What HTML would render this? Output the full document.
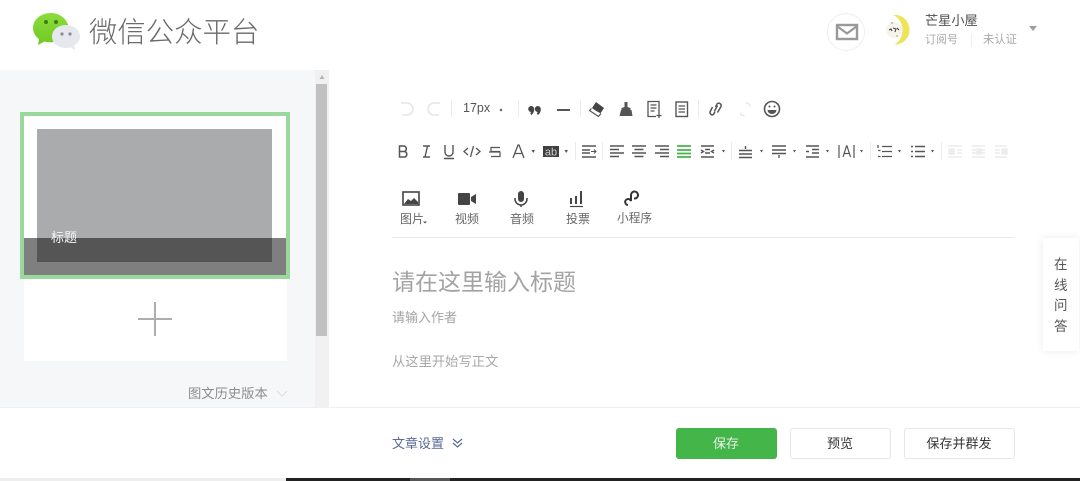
<!DOCTYPE html>
<html lang="zh"><head><meta charset="utf-8"><title>微信公众平台</title>
<style>
html,body{margin:0;padding:0;background:#fff}
#p{position:relative;width:1080px;height:481px;overflow:hidden;background:#fff;font-family:"Liberation Sans","Noto Sans CJK SC",sans-serif;filter:blur(.35px)}
#p div{position:absolute;white-space:nowrap}
svg{position:absolute;left:0;top:0}
.t{line-height:16px;font-size:12px;color:#555}
</style></head><body><div id="p">
<div style="left:0;top:70px;width:329px;height:338px;background:#f6f7f9"></div>
<div style="left:315px;top:70px;width:14px;height:338px;background:#f1f1f1"></div>
<div style="left:316px;top:84px;width:11px;height:252px;background:#c1c1c1"></div>
<div style="left:0;top:407px;width:1080px;height:1px;background:#eef0f2"></div>

<div style="left:20px;top:112px;width:270px;height:167px;box-sizing:border-box;border:4px solid #9bd89b;background:#fff"></div>
<div style="left:37px;top:129px;width:235px;height:133px;background:#aaabac"></div>
<div style="left:24px;top:238px;width:262px;height:37px;background:rgba(0,0,0,.5)"></div>
<div style="left:51px;top:230px;font-size:13px;line-height:16px;color:#f4f4f4">标题</div>
<div style="left:24px;top:279px;width:263px;height:82px;background:#fff"></div>
<div style="left:138px;top:318px;width:34px;height:2px;background:#aeaeae"></div>
<div style="left:154px;top:302px;width:2px;height:34px;background:#aeaeae"></div>
<div style="left:188px;top:385px;font-size:13.3px;line-height:17px;color:#8d8d8d">图文历史版本</div>

<div style="left:89px;top:14px;font-size:28.4px;line-height:38px;color:#6a6a6a;font-weight:300">微信公众平台</div>
<div style="left:925px;top:13px;font-size:13.2px;line-height:16px;color:#4f4f4f">芒星小屋</div>
<div style="left:925px;top:33px;font-size:11px;line-height:15px;color:#a9a9a9">订阅号</div>
<div style="left:983px;top:33px;font-size:11.3px;line-height:15px;color:#a9a9a9">未认证</div>
<div style="left:971px;top:34px;width:1px;height:13px;background:#eee"></div>

<div style="left:463px;top:100px;font-size:12.5px;line-height:16px;color:#555">17px</div>
<div class="t" style="left:400px;top:211px;color:#666">图片</div>
<div class="t" style="left:455px;top:211px;color:#666">视频</div>
<div class="t" style="left:510px;top:211px;color:#666">音频</div>
<div class="t" style="left:566px;top:211px;color:#666">投票</div>
<div class="t" style="left:617px;top:211px;font-size:11.7px;color:#666">小程序</div>
<div style="left:392px;top:237px;width:622px;height:1px;background:#e9e9e9"></div>

<div style="left:392px;top:267px;font-size:23px;line-height:30px;color:#a3a3a3">请在这里输入标题</div>
<div style="left:392px;top:309px;font-size:13px;line-height:17px;color:#a3a3a3">请输入作者</div>
<div style="left:392px;top:353px;font-size:13.3px;line-height:17px;color:#a8a8a8">从这里开始写正文</div>

<div style="left:1043px;top:238px;width:36px;height:113px;background:#fff;box-shadow:0 0 8px rgba(0,0,0,.08)"></div>
<div style="left:1054px;top:255px;width:16px;font-size:13.5px;line-height:20.5px;color:#555;white-space:normal">在<br>线<br>问<br>答</div>

<div style="left:392px;top:435px;font-size:13px;line-height:17px;color:#5a6a92">文章设置</div>
<div style="left:676px;top:428px;width:100px;height:31px;padding-right:1px;background:#44b549;border-radius:3px;color:#e6f6e6;font-size:13px;line-height:31px;text-align:center">保存</div>
<div style="left:790px;top:428px;width:100px;height:31px;padding-right:1px;box-sizing:border-box;border:1px solid #e7e7eb;border-radius:3px;color:#353535;font-size:13px;line-height:29px;text-align:center;width:101px">预览</div>
<div style="left:904px;top:428px;width:111px;height:31px;padding-right:1px;box-sizing:border-box;border:1px solid #e7e7eb;border-radius:3px;color:#353535;font-size:13px;line-height:29px;text-align:center">保存并群发</div>

<div style="left:0;top:478px;width:286px;height:3px;background:#eee"></div>
<div style="left:286px;top:478px;width:794px;height:3px;background:#222"></div>
<div style="left:410px;top:478px;width:40px;height:3px;background:#555"></div>

<svg width="1080" height="481" viewBox="0 0 1080 481" fill="none">
<defs><linearGradient id="g" x1="0" y1="0" x2="0" y2="1"><stop offset="0" stop-color="#8cdc3c"/><stop offset="1" stop-color="#6fca22"/></linearGradient></defs>
<!-- logo -->
<path d="M51 13c-10 0-18 6.500-18 15 0 4.500 2.500 8.500 6 11l-1 6 6.500-3.500c2 .5 4 .8 6.500.8 1 0 2 0 3-.2-.5-1.500-.8-3-.8-4.500 0-7 6.500-12.500 14-12.500h1C66 18 59 13 51 13z" fill="url(#g)"/>
<path d="M66 25c-8 0-14 5-14 11.500S58 48 66 48c1.500 0 3-.2 4.500-.6L75 50l-1-4.500c3.500-2 6-5.300 6-9C80 30 74 25 66 25z" fill="#e6e8ee"/>
<circle cx="46" cy="22" r="2" fill="#3f7d12"/><circle cx="56" cy="22" r="2" fill="#3f7d12"/>
<circle cx="62" cy="34" r="1.600" fill="#8a8d96"/><circle cx="70" cy="34" r="1.600" fill="#8a8d96"/>
<!-- scroll arrow -->
<path d="M322 75l-2.500 4h5z" fill="#b5b5b5"/>
<path d="M277 391l5 5 5-5" stroke="#e0e0e0" stroke-width="1.200"/>
<!-- mail -->
<circle cx="846" cy="32" r="18.500" fill="#fff" stroke="#eee"/>
<rect x="837" y="25" width="20" height="14" stroke="#9a9a9a" stroke-width="2.400"/>
<path d="M837.500 26.500l9.500 7 9.500-7" stroke="#9a9a9a" stroke-width="2.200"/>
<!-- avatar -->
<path d="M893 15c9-1 16.500 5.500 16.500 15 0 9-7.500 15-15.500 14.500 5-2 8.500-8 8.500-14.500 0-6.500-4-13-9.500-15z" fill="#efe35a"/>
<circle cx="894" cy="30" r="8" fill="#f5f3ea"/>
<path d="M889 30l2-1 1 2M893 28l3 1-1 3M897 28l2 2" stroke="#444" stroke-width="1.100"/>
<circle cx="892" cy="23" r=".7" fill="#777"/><circle cx="897" cy="36" r=".8" fill="#999"/>
<path d="M1029 26h8l-4 5z" fill="#a0a0a0"/>
<!-- row 1 -->
<g stroke="#e6e6e6" stroke-width="1.600">
<path d="M401 103h6a6 6 0 0 1 0 12h-5"/>
<path d="M440 103h-6a6 6 0 0 0 0 12h5"/>
</g>
<g fill="#ececec">
<rect x="451" y="100" width="1" height="17"/><rect x="518" y="100" width="1" height="17"/><rect x="580" y="100" width="1" height="17"/><rect x="698" y="100" width="1" height="17"/>
<rect x="575" y="142" width="1" height="18"/><rect x="602" y="142" width="1" height="18"/><rect x="731" y="142" width="1" height="18"/><rect x="870" y="142" width="1" height="18"/><rect x="941" y="142" width="1" height="18"/>
</g>
<path d="M501 108.500l1.500 1.500-1.500 1.500-1.500-1.500z" fill="#555"/>
<circle cx="531.200" cy="109" r="3" fill="#444"/><path d="M534.200 109.500c0 2.500-1.500 4.500-3 5.500l-1-2 4-3.500z" fill="#444"/>
<circle cx="537.800" cy="109" r="3" fill="#444"/><path d="M540.800 109.500c0 2.500-1.500 4.500-3 5.500l-1-2 4-3.500z" fill="#444"/>
<rect x="557" y="109" width="13" height="2" fill="#555"/>
<path d="M596 102l8 6-4 6-8-6z" fill="#444"/><path d="M591.500 108.500l-2 2 9 6 2.500-3" fill="#fff" stroke="#555" stroke-width="1.200"/>
<path d="M624.500 102h3v5l3 1v2h-9v-2l3-1z" fill="#555"/><path d="M621 110h10.500l1 6h-13z" fill="#555"/>
<path d="M659 114v-12.500h-11v15h8M650.500 105h6M650.500 108h6M650.500 111h4M659 113v5M656.500 115.500h5" stroke="#555" stroke-width="1.300"/>
<rect x="676" y="102" width="11.500" height="14.500" stroke="#555" stroke-width="1.400"/><path d="M678.500 106h6.500M678.500 109h6.500M678.500 112h6.500" stroke="#555" stroke-width="1.200"/>
<path d="M715.500 107l1.500-3a2.400 2.400 0 0 1 4 2.500l-3.500 6M714.500 111l3-5.500M715 111.500l-1.500 3a2.400 2.400 0 0 1-3.500-2.500l2.500-5" stroke="#555" stroke-width="1.500"/>
<path d="M746 103.500c2-1.500 4.500 1 3 3.500M741 112.500c-1 2 1.500 4 3.500 2.500" stroke="#eaeaea" stroke-width="1.600"/>
<circle cx="772" cy="109" r="7.500" stroke="#555" stroke-width="1.600"/><circle cx="769.500" cy="106.500" r="1" fill="#555"/><circle cx="774.500" cy="106.500" r="1" fill="#555"/><path d="M767.500 110h9a4.500 4 0 0 1-9 0z" fill="#555"/>
<!-- row 2 -->
<path d="M399.500 146h5a3 3 0 0 1 0 5.500h-5zM399.500 151.500h5.500a3 3 0 0 1 0 5.500h-5.500z" stroke="#555" stroke-width="1.500"/>
<path d="M423 146h7M423 157h7M427.500 146l-2.500 11" stroke="#555" stroke-width="1.400"/>
<path d="M445 145v7a4 4 0 0 0 8 0v-7M444 158.500h10" stroke="#555" stroke-width="1.400"/>
<path d="M468 148l-4 3.500 4 3.500M476 148l4 3.500-4 3.500M473.500 146l-3 11" stroke="#555" stroke-width="1.300"/>
<path d="M500 147.500h-9v4h9M489 152h11.500M500 152v4.500h-9" stroke="#555" stroke-width="1.200"/>
<path d="M513 158l5-13h1l5 13M515 153.500h7.500" stroke="#555" stroke-width="1.300"/>
<path d="M531.500 150h3.500l-1.800 3zM564.500 150h3.500l-1.800 3z" fill="#555"/>
<rect x="543" y="146" width="16" height="11" fill="#3f3f3f"/>
<text x="551" y="155.500" font-size="11" fill="#cfcfcf" text-anchor="middle" font-family="Liberation Sans, sans-serif">ab</text>
<g stroke="#555" stroke-width="1.400">
<path d="M582 146h14M582 150h8M582 153h8M582 157h14"/><path d="M591 151.500h5M594 149.500l2 2-2 2" stroke-width="1"/>
<path d="M610 146h14M610 149.500h9M610 153h14M610 156.500h9"/>
<path d="M632 146h14M634.500 149.500h9M632 153h14M634.500 156.500h9"/>
<path d="M655 146h14M660 149.500h9M655 153h14M660 156.500h9"/>
<path d="M701 146h13M705 149.500h5M705 153h5M701 157h13M701 150l2.500 1.500-2.500 1.500M714 150l-2.500 1.500 2.500 1.500"/>
<path d="M739 150.500h13M745.500 146v3M739 154h13M739 157.500h13" />
<path d="M772 146h14M772 150h14M772 153.500h14M779 155v3"/>
<path d="M806 146h13M812 149.500h7M812 153h7M806 157h13M806 151.500h3"/>
<path d="M839 145v13M854 145v13M843 157l3.500-11h.5l3.500 11M844.500 153.500h5" stroke-width="1.200"/>
<path d="M882 146.500h10M882 151.500h10M882 156.500h10M878 145v3M878 150.500h2.500M878 156.500h2.500" stroke-width="1.300"/>
<path d="M915 146.500h10M915 151.500h10M915 156.500h10M911 146.500h2M911 151.500h2M911 156.500h2"/>
</g>
<path d="M677 146h14M677 150h14M677 153.500h14M677 157h14" stroke="#44b549" stroke-width="1.800"/>
<g fill="#555"><path d="M722 150l3 0-1.500 2.500zM760 150l3 0-1.500 2.500zM793 150l3 0-1.500 2.500zM826 150l3 0-1.500 2.500zM860 150l3 0-1.500 2.500zM898 150l3 0-1.500 2.500zM931 150l3 0-1.500 2.500z"/></g>
<g stroke="#ececec" stroke-width="1.400">
<path d="M948 146h14M948 157h14M957 150h5M957 153h5M972 146h13M972 157h13M972 150h4M981 150h4M972 153h4M981 153h4M995 146h12M995 157h12M995 150h5M995 153h5"/>
<rect x="949" y="149" width="5" height="5" fill="#ececec"/><rect x="977" y="149" width="4" height="5" fill="#ececec"/><rect x="1002" y="149" width="5" height="5" fill="#ececec"/>
</g>
<!-- row 3 -->
<rect x="403" y="192" width="16" height="13" stroke="#444" stroke-width="1.600"/><path d="M404 204l4-5 3 2 3-3 4 4v2z" fill="#444"/>
<rect x="458" y="193" width="12" height="12" fill="#444" rx="1"/><path d="M471 197l5-3v10l-5-3z" fill="#444"/>
<rect x="518" y="191" width="6" height="11" rx="3" fill="#444"/><path d="M515 198v1a6 6 0 0 0 12 0v-1M521 205v2" stroke="#444" stroke-width="1.500"/>
<path d="M571 198v6M576 196v8M581 191v13" stroke="#444" stroke-width="2"/><path d="M570 206.500h13" stroke="#444" stroke-width="1.200"/>
<path d="M628 205a3 3 0 1 1 3-4v-6a3.500 3.500 0 1 1 3 3.500" stroke="#333" stroke-width="2"/>
<path d="M423 221.500h4l-2 2z" fill="#555"/>
<path d="M453 439l4.500 4 4.500-4M453 443l4.500 4 4.500-4" stroke="#5a6a92" stroke-width="1.200"/>
</svg>
</div></body></html>
